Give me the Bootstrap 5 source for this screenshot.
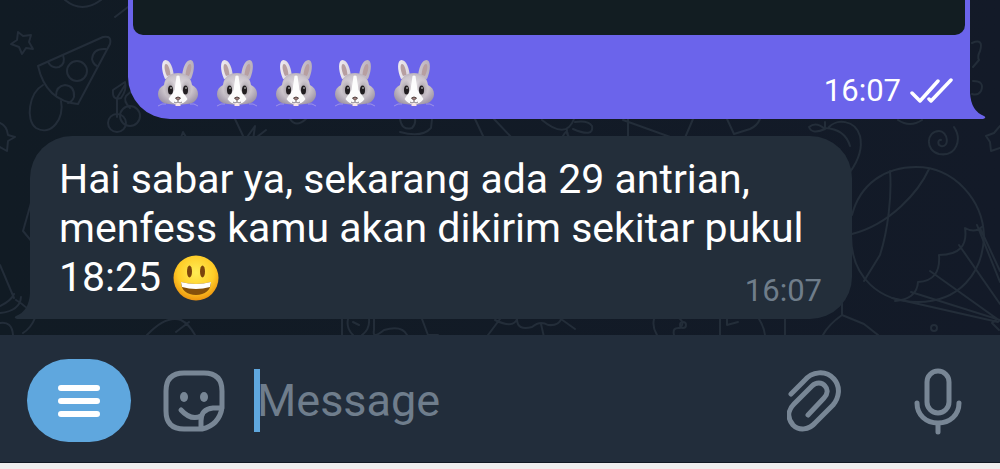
<!DOCTYPE html>
<html lang="id">
<head>
<meta charset="utf-8">
<meta name="viewport" content="width=device-width, initial-scale=1">
<title>Chat</title>
<link rel="stylesheet" href="https://cdn.jsdelivr.net/npm/bootstrap@5.3.0/dist/css/bootstrap.min.css">
<style>
  body { background: #eee; font-family: Roboto, "Liberation Sans", sans-serif; }
  .chat { background: linear-gradient(90deg, #111b24, #131a28); padding: 0 30px 16px; }
  .wallpaper { fill: none; stroke: #232d39; stroke-width: 2; stroke-linecap: round; stroke-linejoin: round; }
  .bubble { position: relative; color: #fff; }
  .bubble-out { background: #6b64eb; margin-left: 98px; padding: 0 5px 12px; border-radius: 0 0 0 42px; }
  .bubble-in { background: #232e3a; margin: 17px 118px 0 0; padding: 19px 30px 17px 29px; border-radius: 42px 42px 42px 0; }
  .photo { height: 35px; background: #121d22; border-radius: 0 0 10px 10px; }
  .caption { padding: 22px 12px 0 23px; }
  .rabbits { gap: 15px; }
  .rabbit { width: 44px; height: 50px; }
  .message-text { font-size: 41px; line-height: 49px; }
  .smile { width: 46px; height: 46px; margin: -4px 0 0 2px; }
  .stamp { font-size: 31px; line-height: 32px; }
  .stamp-in { margin-top: 22px; color: #6f7d8a; }
  .ticks { width: 44px; height: 28px; }
  .tail { position: absolute; bottom: 0; width: 16px; height: 30px; }
  .tail-out { left: 100%; fill: #6b64eb; }
  .tail-in { right: 100%; fill: #232e3a; }
  .composer { background: #222d3b; padding: 24px 37px 20px 27px; border-bottom: 1px solid #111923; color: #788695; }
  .menu-btn { width: 104px; height: 83px; border-radius: 42px; background: #5fa7de; }
  .icon-btn { color: inherit; }
  .message-box { min-width: 0; font-size: 45px; line-height: 52px; color: #fff; margin-left: -3px; }
  .message-box::placeholder { color: #6f7d8c; opacity: 1; }
  .message-box:focus { outline: 0; }
  .caret { width: 6px; height: 63px; background: #5fa7de; margin-left: 21px; }
  .mic-btn { margin-left: 72px; }
  .line-icon { fill: none; stroke: currentColor; stroke-width: 5; stroke-linecap: round; stroke-linejoin: round; }
</style>
</head>
<body>
<svg width="0" height="0" class="position-absolute" aria-hidden="true">
  <defs>
    <radialGradient id="fur" cx="50%" cy="45%" r="60%"><stop offset="0" stop-color="#e6e2e6"/><stop offset=".6" stop-color="#cbc4cb"/><stop offset="1" stop-color="#9c92a4"/></radialGradient>
    <radialGradient id="patch"><stop offset="0" stop-color="#857d86" stop-opacity=".8"/><stop offset="1" stop-color="#9d959e" stop-opacity="0"/></radialGradient>
    <linearGradient id="ear" x2="1"><stop offset="0" stop-color="#eeeaf0"/><stop offset="1" stop-color="#b9afba"/></linearGradient>
    <radialGradient id="sun" cx="50%" cy="38%" r="62%"><stop offset="0" stop-color="#ffed55"/><stop offset=".65" stop-color="#ffcc27"/><stop offset="1" stop-color="#ec930f"/></radialGradient>
    <symbol id="rabbit" viewBox="0 0 44 50">
      <path d="M9 22C5 13 5 3 9.500 3c5 0 8 9 8.500 17zM35 22c4-9 4-19-.5-19-5 0-8 9-8.500 17z" fill="url(#ear)"/>
      <path d="M11 19C8 13 8 7 10 7c2.500 0 4 6 4.500 11zM33 19c3-6 3-12 1-12-2.500 0-4 6-4.500 11z" fill="#b79fa1"/>
      <path d="M22 16c-8 0-13 4-14 12-4 2-6 5-6 9 0 6 5 10 11 10 3 0 6 1 9 1s6-1 9-1c6 0 11-4 11-10 0-4-2-7-6-9-1-8-6-12-14-12z" fill="url(#fur)"/>
      <ellipse cx="14" cy="32" rx="6" ry="9" fill="url(#patch)"/><ellipse cx="30" cy="32" rx="6" ry="9" fill="url(#patch)"/>
      <path d="M20.500 19q1.500-1 3 0l2 14 6 9q-3 5-9.500 5t-9.500-5l6-9z" fill="#fff" opacity=".92"/>
      <ellipse cx="14.500" cy="33" rx="2.500" ry="4.500" fill="#211d20"/><ellipse cx="29.500" cy="33" rx="2.500" ry="4.500" fill="#211d20"/>
      <circle cx="15" cy="31" r="1" fill="#999"/><circle cx="30" cy="31" r="1" fill="#999"/>
      <path d="M19.500 41q2.500-2 5 0L22 43.500z" fill="#a58380" stroke="#51413f"/>
      <path d="M22 44v1m-4 0q2 2 4 0q2 2 4 0" fill="none" stroke="#8a838a"/>
      <path d="M19.500 46.500h5v2.500h-5z" fill="#f9e3e3"/>
      <path d="M2 49q4-3 8-2M42 49q-4-3-8-2" fill="none" stroke="#b3a6e6" stroke-width=".7"/>
    </symbol>
  </defs>
</svg>

<main class="chat position-relative overflow-hidden">
  <svg class="wallpaper position-absolute top-0 start-0 w-100 h-100" viewBox="0 0 1000 335" preserveAspectRatio="xMidYMid slice" aria-hidden="true">
    <path d="M18 32l5 4 8-1-2 7 4 7-7-1-4 6-3-7-8-3 6-4z"/>
    <path d="M65 0q17 14 36 0M115 17l13-10M38 66l65-29q9-2 7 7L78 104q-32-3-40-38z"/>
    <path d="M48 62q4 7 11 5 7-3 4-12M106 49q-13-1-14 10 1 5 5 7M56 96q0-10 9-11 10 1 9 12-2 5-6 6"/>
    <circle cx="77" cy="71" r="10"/>
    <path d="M43 85c-14 8-18 35-7 43 15 9 29-10 25-27M117 117V98l8-13M130 108q-7-7-4-12l8-7M121 98q-9 3-8-8l12-8q2 8-4 16"/>
    <circle cx="117" cy="123" r="9"/><circle cx="130" cy="116" r="10"/>
    <path d="M0 123q7 3 8 12l7 2-7 4-1 10-7-4M33 196l-10 35 10 12M0 265l14 33m-14 15q20-2 21-16M0 306q11-5 14-12M16 300q12 7 19 18-4 10-12 15M0 323q12-2 13 12"/>
    <path d="M235 119l10 21 10-14-2 14 13-10M180 140l3-8 3 5M290 119q6 9 16 0M400 119q2 12 12 9 4-4 3-9M400 132q22 6 31-4l1-9"/>
    <path d="M475 119l9 19M494 119l18 19M542 120q24 20 32-1m-11 17q5-9 5 1m5-8q21 9 19-3-4-6-17-4m-8 8q-2 10 20 14M628 119v19m-5-18l50 18M693 119l-9 21M727 119l7 15 16-5q7-3 10-10"/>
    <path d="M825 129q-9-8-16-2 3 8 16 2v-7m0 6q20 1 25 18M829 127c7-8 26-8 31 9 3 13-2 25-10 36"/>
    <path d="M898 120q12 8 24 0M941 140c-3-1-4 5 0 6 9 2 7-15-2-15-13 0-14 20 0 23 18 3 23-15 15-27M1000 126l-6 7-8 3 4 6 1 9 9-3"/>
    <path d="M972 43q12-5 8 8-3 6-1 9l-6 7m0 14q12 0 8 10-3 5-9 3"/>
    <path d="M852 215c8-31 33-48 64-48 39 0 67 34 68 69-1 38-26 66-66 66-38 0-67-24-67-67M890 171c2 24-2 59-10 84l-16 26M929 169c-10 22-38 55-77 65"/>
    <path d="M983 226q-8 8-18 2 4 27-26 27 2 26-21 27-1 17-23 19M892 298l106 24M977 225l23 57M981 230l19 41M959 245l41 59M930 271l70 50M911 292l89 28M996 320l-4 3 7 7"/>
    <path d="M842 303v12l22 9 14 11M842 315q-14 10-19 20"/>
    <circle cx="934" cy="328" r="3"/>
    <path d="M147 335q19-20 34-15 8 4 14 15M176 332l13-10M342 318v17m6-16q-2 9 5 16m16-16q1 10-7 16m-9-13l6 3M374 319v11q-2 10 10 0 18-5 23 5M422 319l6 16h10"/>
    <path d="M500 319l-12 16m7-15q18 9 22-1 0 12 15 8 8-7 16-2 11 1 13-6l14 10m-34-5l3 13M654 319q-2 8 3 16M680 319q5 4 0 9-8-1-6 7M720 319v16m7-16v6l11-3M759 319q5 8 6 16M785 319v16"/>
    <circle cx="683" cy="325" r="3"/>
  </svg>

  <article class="bubble bubble-out">
    <div class="photo"></div>
    <div class="caption d-flex justify-content-between align-items-end">
      <div class="rabbits d-flex" role="img" aria-label="Lima emoji kelinci">
        <svg class="rabbit"><use href="#rabbit"/></svg>
        <svg class="rabbit"><use href="#rabbit"/></svg>
        <svg class="rabbit"><use href="#rabbit"/></svg>
        <svg class="rabbit"><use href="#rabbit"/></svg>
        <svg class="rabbit"><use href="#rabbit"/></svg>
      </div>
      <div class="stamp d-flex align-items-center gap-2">
        <time datetime="16:07">16:07</time>
        <svg class="ticks" viewBox="0 0 44 28" fill="none" stroke="#fff" stroke-width="3.500" stroke-linecap="round" stroke-linejoin="round" role="img" aria-label="Dibaca"><path d="M3 16l8 8L29 4M20 22l2 2L42 3"/></svg>
      </div>
    </div>
    <svg class="tail tail-out" viewBox="0 0 16 30" aria-hidden="true"><path d="M0 0v30h13q4-1 1-3Q1 22 0 4z"/></svg>
  </article>

  <article class="bubble bubble-in">
    <p class="message-text mb-0">Hai sabar ya, sekarang ada 29 antrian, menfess kamu akan dikirim sekitar pukul 18:25
      <svg class="smile align-middle" viewBox="0 0 46 46" role="img" aria-label="Emoji tersenyum">
        <circle cx="23" cy="23" r="22.500" fill="url(#sun)"/>
        <ellipse cx="16.500" cy="16.500" rx="2.500" ry="6" fill="#7b430c"/><ellipse cx="29.500" cy="16.500" rx="2.500" ry="6" fill="#7b430c"/>
        <path d="M8 27q15 4 30 0c0 8-6 13-15 13S8 35 8 27z" fill="#85500b"/>
        <path d="M8 27q15 4 30 0l-1 5q-14 4-28 0z" fill="#fff"/>
      </svg>
      <time class="stamp stamp-in float-end" datetime="16:07">16:07</time>
    </p>
    <svg class="tail tail-in" viewBox="0 0 16 30" aria-hidden="true"><path d="M16 0v30H3q-4-1-1-3Q15 22 16 4z"/></svg>
  </article>
</main>

<form class="composer d-flex align-items-center">
  <button type="button" class="menu-btn btn border-0 p-0 flex-shrink-0" aria-label="Menu">
    <svg width="42" height="34" viewBox="0 0 42 34" stroke="#fff" stroke-width="6" stroke-linecap="round"><path d="M3 4h36M3 17h36M3 30h36"/></svg>
  </button>
  <button type="button" class="icon-btn btn border-0 p-0 ms-4 flex-shrink-0" aria-label="Stiker">
    <svg class="line-icon d-block mx-2" width="62" height="62" viewBox="0 0 62 62">
      <path d="M21 3h20q18 0 18 18v17Q56 55 39 59H21Q3 59 3 41V21Q3 3 21 3zM59 38H50q-12 1-12 13v8"/><path d="M18 40q10 11 20 6" />
      <ellipse cx="21" cy="27" rx="4" ry="5" fill="currentColor" stroke="none"/><ellipse cx="41" cy="27" rx="4" ry="5" fill="currentColor" stroke="none"/>
    </svg>
  </button>
  <span class="caret flex-shrink-0"></span>
  <input type="text" class="message-box flex-grow-1 border-0 bg-transparent p-0" placeholder="Message" aria-label="Message">
  <button type="button" class="icon-btn btn border-0 p-0 flex-shrink-0" aria-label="Lampirkan">
    <svg class="line-icon d-block" width="54" height="62" viewBox="0 0 54 62"><path d="M4 24L17 11C25 1 39 0 47 9c7 8 5 19-1 26L28 53c-6 7-16 8-22 2-6-7-5-15 1-21l18-18c4-4 10-4 13 0 3 3 3 8-1 12L21 45"/></svg>
  </button>
  <button type="button" class="mic-btn icon-btn btn border-0 p-0 flex-shrink-0" aria-label="Pesan suara">
    <svg class="line-icon d-block" width="50" height="68" viewBox="0 0 50 68"><rect x="14" y="4" width="22" height="42" rx="11"/><path d="M4 36c0 12 9 20 21 20s21-8 21-20M25 56v9"/></svg>
  </button>
</form>
<script src="https://cdn.jsdelivr.net/npm/bootstrap@5.3.0/dist/js/bootstrap.bundle.min.js"></script>
</body>
</html>
